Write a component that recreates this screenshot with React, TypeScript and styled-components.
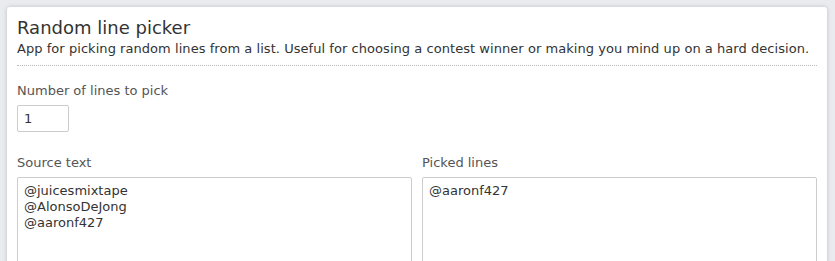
import React from "react";
import styled, { createGlobalStyle } from "styled-components";

const Global = createGlobalStyle`
  html, body { margin: 0; padding: 0; background: #e9ebee; }
  body { font-family: "DejaVu Sans", "Liberation Sans", sans-serif; color: #333; }
  * { box-sizing: border-box; }
`;

const Page = styled.div`
  padding: 7px 8px 0 7px;
`;

const Card = styled.section`
  background: #fff;
  border-radius: 3px;
  box-shadow: 0 0 4px rgba(0, 0, 0, 0.18);
  padding: 10px 10px 20px;
`;

const Title = styled.h1`
  margin: 0;
  font-size: 18px;
  font-weight: normal;
  line-height: 22px;
  color: #333;
`;

const Lead = styled.p`
  margin: 1px 0 0;
  font-size: 13px;
  line-height: 18px;
  letter-spacing: 0.05px;
  color: #333;
`;

const Divider = styled.hr`
  margin: 7px 0 0;
  border: 0;
  border-top: 1px dotted #bbb;
`;

const Field = styled.div`
  display: flex;
  flex-direction: column;
  margin-top: 16px;
`;

const Label = styled.label`
  font-size: 13px;
  line-height: 18px;
  color: #555;
  margin-bottom: 5px;
`;

const NumberInput = styled.input`
  width: 52px;
  height: 27px;
  border: 1px solid #ccc;
  border-radius: 2px;
  padding: 0 6px;
  font: inherit;
  font-size: 13px;
  color: #333;
`;

const Columns = styled.div`
  display: grid;
  grid-template-columns: 1fr 1fr;
  gap: 10px;
  margin-top: 6px;
`;

const Area = styled.textarea`
  width: 100%;
  height: 140px;
  border: 1px solid #ccc;
  border-radius: 2px;
  padding: 5px 6px;
  font: inherit;
  font-size: 13px;
  line-height: 16px;
  color: #333;
  resize: none;
`;

export default function App() {
  return (
    <>
      <Global />
      <Page>
        <Card>
          <Title>Random line picker</Title>
          <Lead>
            App for picking random lines from a list. Useful for choosing a contest winner or making you mind up on a hard decision.
          </Lead>
          <Divider />
          <Field>
            <Label>Number of lines to pick</Label>
            <NumberInput defaultValue="1" />
          </Field>
          <Columns>
            <Field>
              <Label>Source text</Label>
              <Area defaultValue={"@juicesmixtape\n@AlonsoDeJong\n@aaronf427"} />
            </Field>
            <Field>
              <Label>Picked lines</Label>
              <Area defaultValue={"@aaronf427"} />
            </Field>
          </Columns>
        </Card>
      </Page>
    </>
  );
}
